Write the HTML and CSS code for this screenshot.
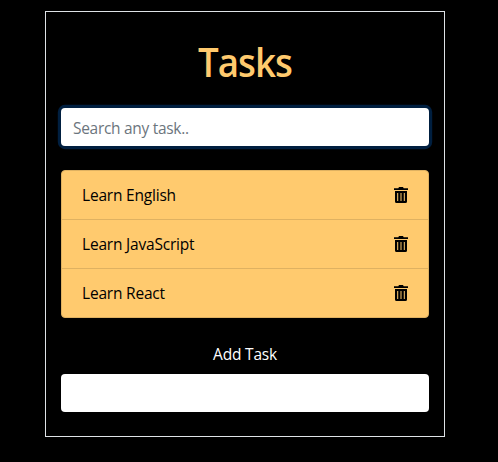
FILE: index.html
```html
<!DOCTYPE html>
<html lang="en">
<head>
<meta charset="utf-8">
<title>Tasks</title>
<link rel="stylesheet" href="styles.css">
</head>
<body>
<svg width="0" height="0" class="sprite" aria-hidden="true">
  <symbol id="trash" viewBox="0 0 14 16">
    <path fill="currentColor" fill-rule="evenodd" d="M0 1.2h4.300L5 0h4l.7 1.200H14V3H0zM1 4h12v10.500a1.500 1.500 0 0 1-1.500 1.500h-9A1.500 1.500 0 0 1 1 14.500zM3.200 6v8h1V6zM6.500 6v8h1V6zM9.800 6v8h1V6z"/>
  </symbol>
</svg>
<main class="card">
  <h1 class="title">Tasks</h1>
  <input class="field search" type="text" placeholder="Search any task..">
  <ul class="list">
    <li class="item"><span>Learn English</span><svg class="icon"><use href="#trash"/></svg></li>
    <li class="item"><span>Learn JavaScript</span><svg class="icon"><use href="#trash"/></svg></li>
    <li class="item"><span>Learn React</span><svg class="icon"><use href="#trash"/></svg></li>
  </ul>
  <label class="label" for="add">Add Task</label>
  <input class="field" id="add" type="text">
</main>
</body>
</html>
```
FILE: styles.css
```css
* { box-sizing: border-box; }
body {
  margin: 0;
  background: #000;
  color: #fff;
  font: 15.5px/24px "Open Sans", "Noto Sans", sans-serif;
  letter-spacing: -0.2px;
}
.sprite { position: absolute; }
.card {
  width: 400px;
  height: 426px;
  margin: 11px 0 0 45px;
  padding: 24px 15px;
  border: 1px solid #dee2e6;
}
.title {
  margin: 0 0 24px;
  height: 48px;
  font-size: 39px;
  line-height: 52px;
  font-weight: 600;
  font-stretch: 92%;
  letter-spacing: -1px;
  transform: scaleX(0.94);
  text-align: center;
  color: #ffca6e;
}
.field {
  display: block;
  width: 100%;
  height: 38px;
  padding: 7px 12px 5px;
  border: 0;
  border-radius: 4px;
  background: #fff;
  font: inherit;
  letter-spacing: -0.3px;
  outline: none;
}
.field::placeholder { color: #6c757d; opacity: 1; }
.search { box-shadow: 0 0 0 3.2px #001f40; }
.list {
  list-style: none;
  margin: 24px 0;
  padding: 0;
  border: 1px solid #dfb161;
  border-radius: 4px;
  background: #ffca6e;
  color: #000;
}
.item {
  display: flex;
  align-items: center;
  justify-content: space-between;
  height: 49px;
  padding: 0 20px;
  border-bottom: 1px solid #dfb161;
}
.item:last-child { height: 48px; border-bottom: 0; }
.icon { width: 14px; height: 16px; }
.label {
  display: block;
  margin-bottom: 8px;
  text-align: center;
}
```
